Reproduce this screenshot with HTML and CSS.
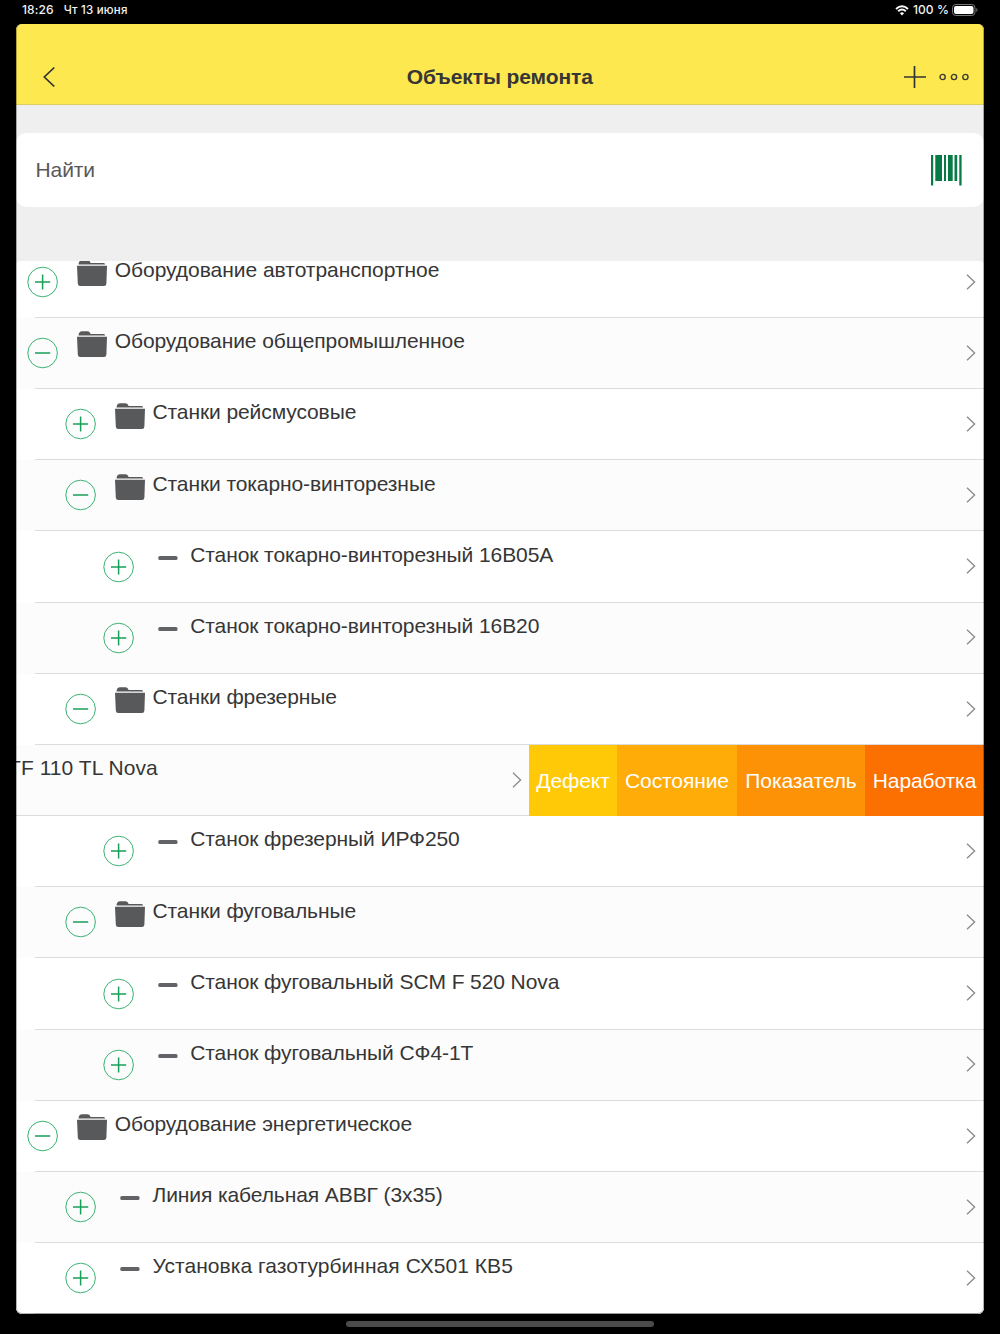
FILE: index.html
```html
<!DOCTYPE html>
<html lang="ru">
<head>
<meta charset="utf-8">
<title>Объекты ремонта</title>
<link rel="stylesheet" href="styles.css">
</head>
<body>
<svg class="defs" width="0" height="0">
  <symbol id="plus" viewBox="0 0 32 32"><circle cx="15.600" cy="16" r="14.8" fill="none" stroke="#3bb273" stroke-width="1"/><path d="M8 16H23.2M15.600 8.4V23.6" stroke="#18a058" stroke-width="1.5"/></symbol>
  <symbol id="minus" viewBox="0 0 32 32"><circle cx="15.600" cy="16" r="14.8" fill="none" stroke="#3bb273" stroke-width="1"/><path d="M8 16H23.2" stroke="#18a058" stroke-width="1.5"/></symbol>
  <symbol id="folder" viewBox="0 0 30 26"><path d="M1.6 4.6V3.4Q2.4 .2 5 .2H10.500Q12.500 .2 13.300 2.200L13.500 3H26.500Q28.200 3 28.200 4.600Z M0 5.800H30L29.400 23.500Q29.200 26 27 26H3.200Q1 26 .8 23.500Z" fill="#58595b"/></symbol>
  <symbol id="dash" viewBox="0 0 20 4"><rect x=".3" y=".1" width="19.200" height="3.800" rx="1.500" fill="#626366"/></symbol>
  <symbol id="chev" viewBox="0 0 10 16"><path d="M1 .8L8.600 8L1 15.200" fill="none" stroke="#8b8b8d" stroke-width="1.350"/></symbol>
</svg>
<header class="status">
  <span class="time">18:26</span><span class="date">Чт 13 июня</span>
  <svg class="wifi" width="14" height="11" viewBox="0 0 14 11"><path d="M1 4Q7-1.500 13 4M3.200 6.300Q7 2.900 10.800 6.300" fill="none" stroke="#fff" stroke-width="1.900"/><path d="M4.900 8.200Q7 6.300 9.100 8.200L7 10.400Z" fill="#fff"/></svg>
  <span class="percent">100 %</span>
  <svg class="battery" width="26" height="12" viewBox="0 0 26 12"><rect x=".5" y=".5" width="22.500" height="11" rx="3.300" fill="none" stroke="#77777a"/><rect x="2" y="2" width="19.500" height="8" rx="2" fill="#fff"/><path d="M24.300 4V8Q25.500 7.500 25.500 6T24.300 4" fill="#77777a"/></svg>
</header>
<main class="app">
  <nav class="bar">
    <svg class="back" width="14" height="22" viewBox="0 0 14 22"><path d="M12.300 1.500L2.300 11L12.300 20.500" fill="none" stroke="#333" stroke-width="1.700"/></svg>
    <h1 class="title">Объекты ремонта</h1>
    <div class="tools">
      <svg width="22" height="22" viewBox="0 0 22 22"><path d="M0 11H22M10.500 0V22" stroke="#333" stroke-width="1.700"/></svg>
      <svg width="30" height="8" viewBox="0 0 30 8"><g fill="none" stroke="#3d3b32" stroke-width="1.400"><circle cx="3.600" cy="4" r="2.600"/><circle cx="15" cy="4" r="2.600"/><circle cx="26.400" cy="4" r="2.600"/></g></svg>
    </div>
  </nav>
  <div class="search">
    <span class="placeholder">Найти</span>
    <svg width="31" height="31" viewBox="0 0 31 31" fill="#087a45"><path d="M0 0H2.200V30.500H0ZM4.300 0H11V26H4.300ZM13 0H15V26H13ZM17 0H21.700V26H17ZM23.500 0H26.200V26H23.500ZM28.300 0H30.600V30.500H28.300Z"/></svg>
  </div>
  <section class="list">
    <div class="row first"><svg class="toggle"><use href="#plus"/></svg><svg class="folder"><use href="#folder"/></svg><span class="name">Оборудование автотранспортное</span><svg class="chev"><use href="#chev"/></svg></div>
    <div class="row alt"><svg class="toggle"><use href="#minus"/></svg><svg class="folder"><use href="#folder"/></svg><span class="name">Оборудование общепромышленное</span><svg class="chev"><use href="#chev"/></svg></div>
    <div class="row l1"><svg class="toggle"><use href="#plus"/></svg><svg class="folder"><use href="#folder"/></svg><span class="name">Станки рейсмусовые</span><svg class="chev"><use href="#chev"/></svg></div>
    <div class="row l1 alt"><svg class="toggle"><use href="#minus"/></svg><svg class="folder"><use href="#folder"/></svg><span class="name">Станки токарно-винторезные</span><svg class="chev"><use href="#chev"/></svg></div>
    <div class="row l2"><svg class="toggle"><use href="#plus"/></svg><svg class="dash"><use href="#dash"/></svg><span class="name">Станок токарно-винторезный 16В05А</span><svg class="chev"><use href="#chev"/></svg></div>
    <div class="row l2 alt"><svg class="toggle"><use href="#plus"/></svg><svg class="dash"><use href="#dash"/></svg><span class="name">Станок токарно-винторезный 16В20</span><svg class="chev"><use href="#chev"/></svg></div>
    <div class="row l1"><svg class="toggle"><use href="#minus"/></svg><svg class="folder"><use href="#folder"/></svg><span class="name">Станки фрезерные</span><svg class="chev"><use href="#chev"/></svg></div>
    <div class="row swiped">
      <div class="slid"><span class="name">TF 110 TL Nova</span><svg class="chev"><use href="#chev"/></svg></div>
      <div class="actions"><button class="act defect">Дефект</button><button class="act state">Состояние</button><button class="act metric">Показатель</button><button class="act hours">Наработка</button></div>
    </div>
    <div class="row l2"><svg class="toggle"><use href="#plus"/></svg><svg class="dash"><use href="#dash"/></svg><span class="name">Станок фрезерный ИРФ250</span><svg class="chev"><use href="#chev"/></svg></div>
    <div class="row l1 alt"><svg class="toggle"><use href="#minus"/></svg><svg class="folder"><use href="#folder"/></svg><span class="name">Станки фуговальные</span><svg class="chev"><use href="#chev"/></svg></div>
    <div class="row l2"><svg class="toggle"><use href="#plus"/></svg><svg class="dash"><use href="#dash"/></svg><span class="name">Станок фуговальный SCM F 520 Nova</span><svg class="chev"><use href="#chev"/></svg></div>
    <div class="row l2 alt"><svg class="toggle"><use href="#plus"/></svg><svg class="dash"><use href="#dash"/></svg><span class="name">Станок фуговальный СФ4-1Т</span><svg class="chev"><use href="#chev"/></svg></div>
    <div class="row"><svg class="toggle"><use href="#minus"/></svg><svg class="folder"><use href="#folder"/></svg><span class="name">Оборудование энергетическое</span><svg class="chev"><use href="#chev"/></svg></div>
    <div class="row l1 alt"><svg class="toggle"><use href="#plus"/></svg><svg class="dash"><use href="#dash"/></svg><span class="name">Линия кабельная АВВГ (3х35)</span><svg class="chev"><use href="#chev"/></svg></div>
    <div class="row l1 last"><svg class="toggle"><use href="#plus"/></svg><svg class="dash"><use href="#dash"/></svg><span class="name">Установка газотурбинная СХ501 КВ5</span><svg class="chev"><use href="#chev"/></svg></div>
  </section>
</main>
<div class="home"></div>
</body>
</html>
```

FILE: styles.css
```css
* { box-sizing: border-box; }
body {
  margin: 0;
  height: 1334px;
  overflow: hidden;
  background: #000;
  color: #363636;
  font-family: "Liberation Sans", Arial, sans-serif;
}
svg { display: block; flex: none; }
.defs { position: absolute; }
.status {
  display: flex;
  align-items: center;
  height: 24px;
  padding: 0 22px 4px 22px;
  color: #f2f2f2;
  font: 500 12px/20px Inter, sans-serif;
  letter-spacing: .1px;
}
.date { margin-left: 10px; font-size: 11.500px; letter-spacing: .2px; }
.wifi { margin-left: auto; }
.percent { margin: 0 3px 0 4px; }
.app {
  position: relative;
  height: 1290px;
  margin: 0 16px;
  overflow: hidden;
  border-radius: 6px;
  background: #efefef;
}
.app::after {
  content: "";
  position: absolute;
  inset: 0;
  border: solid rgba(0, 0, 0, .3);
  border-width: 0 1px 1px;
  border-radius: 6px;
  pointer-events: none;
}
.bar {
  display: grid;
  grid-template-columns: 1fr auto 1fr;
  align-items: center;
  height: 81px;
  padding: 25px 15.500px 0 26px;
  background: #fde850;
  border-bottom: 1px solid #ddcd60;
}
.title { margin: 0 0 0 -11px; font-size: 21px; line-height: 24px; letter-spacing: -.1px; }
.tools { display: flex; align-items: center; justify-content: flex-end; gap: 13px; }
.search {
  display: flex;
  align-items: center;
  justify-content: space-between;
  height: 74px;
  margin: 28px 0 54px;
  padding: 0 22px 0 19.500px;
  border-radius: 10px;
  background: #fff;
}
.placeholder { color: #58595b; font-size: 21px; letter-spacing: -.1px; }
.list { height: 1053px; overflow: hidden; background: #fff; border-radius: 4px 4px 0 0; }
.row {
  display: flex;
  align-items: flex-start;
  position: relative;
  height: 71.18px;
  padding: 0 8px 0 11px;
}
.first { margin-top: -14.3px; }
.row::after {
  content: "";
  position: absolute;
  inset: auto 0 0 19px;
  height: 1px;
  background: #dcdcdd;
}
.alt, .slid { background: #fcfcfc; }
.l1 { padding-left: 48.75px; }
.l2 { padding-left: 86.500px; }
.toggle { width: 32px; height: 32px; margin-top: 19.200px; }
.folder { width: 30px; height: 26px; margin: 13.500px 8px 0 18px; }
.dash { width: 20px; height: 4px; margin: 24.300px 13px 0 23px; }
.name { margin-left: -.3px; font-size: 21px; line-height: 24px; letter-spacing: -.09px; padding-top: 11.300px; white-space: nowrap; }
.first .name { letter-spacing: -.03px; }
.last .name { letter-spacing: .05px; }
.chev { width: 10px; height: 16px; margin: 26.900px 0 0 auto; }
.row.swiped { padding: 0; }
.swiped::after { left: 0; width: 513px; }
.slid { display: flex; flex: 1; align-self: stretch; padding-right: 7px; }
.slid .name { margin-left: -8px; letter-spacing: .05px; }
.actions { display: grid; grid-template-columns: 88px 120px 128px 119px; height: 71.18px; }
.act { border: 0; padding: 1px 0 0; color: #fff; font: 21px "Liberation Sans", Arial, sans-serif; letter-spacing: -.1px; white-space: nowrap; }
.defect { background: #ffc907; }
.state { background: #ffab08; }
.metric { background: #fd9206; }
.hours { background: #fb7000; }
.home { width: 308px; height: 6px; margin: 7px auto 0; border-radius: 3px; background: #4b4b4b; }
```
